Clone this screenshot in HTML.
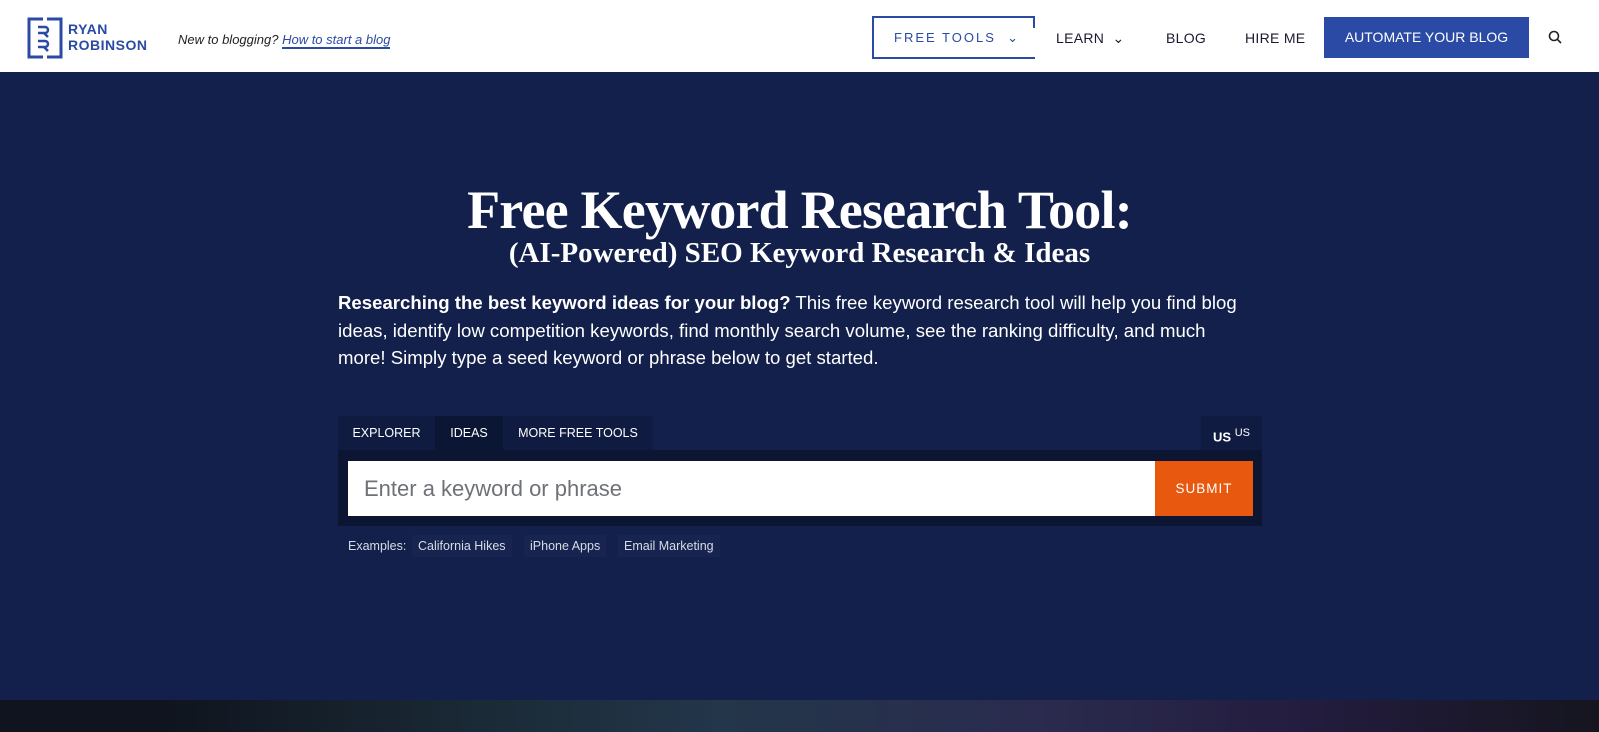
<!DOCTYPE html>
<html><head><meta charset="utf-8"><style>
*{margin:0;padding:0;box-sizing:border-box}
body{width:1599px;height:732px;overflow:hidden;background:#12204b;font-family:"Liberation Sans",sans-serif;position:relative}
.nav{position:absolute;left:0;top:0;width:1599px;height:72px;background:#fff}
.a{position:absolute}
.navl{font-size:14px;color:#1a1a2e;letter-spacing:.3px;top:30px}
.hero{color:#fff}
.tab{position:absolute;top:416px;height:34px;background:#0f1b40;color:#fff;font-size:12.5px;line-height:34px;text-align:center}
.ex{position:absolute;top:535px;height:22px;line-height:22px;font-size:12.5px;color:#d8dbe6;background:#16244f;padding:0 6px}
</style></head><body>
<div class="nav">
 <svg class="a" style="left:27px;top:17px" width="36" height="42" viewBox="0 0 36 42" fill="none" stroke="#2a4aa5" stroke-width="3">
  <path d="M16 2H2V40H16M20 2H34V40H20"/>
  <path d="M11 10h7a3 3 0 0 1 0 6h-7M17 16l4 4" stroke-width="2.5"/>
  <path d="M11 24h7a3 3 0 0 1 0 6h-7M17 30l4 4" stroke-width="2.5"/>
 </svg>
 <div class="a" style="left:68px;top:21px;font-size:14px;font-weight:bold;color:#2a4aa5;line-height:16px;letter-spacing:.5px">RYAN<br>ROBINSON</div>
 <div class="a" style="left:178px;top:32px;font-size:13px;font-style:italic;color:#222">New to blogging? <span style="color:#2a4aa5;border-bottom:2px solid #2a4aa5">How to start a blog</span></div>
 <div class="a" style="left:872px;top:16px;width:163px;height:43px;border:2px solid #2a4aa5;border-right:none"></div>
 <div class="a" style="left:1033px;top:16px;width:2px;height:12px;background:#2a4aa5"></div>
 <div class="a navl" style="left:894px;color:#2a4aa5;letter-spacing:2px;font-size:13px">FREE TOOLS &nbsp;⌄</div>
 <div class="a navl" style="left:1056px">LEARN &nbsp;⌄</div>
 <div class="a navl" style="left:1166px">BLOG</div>
 <div class="a navl" style="left:1245px">HIRE ME</div>
 <div class="a" style="left:1324px;top:17px;width:205px;height:41px;background:#2a4aa5;color:#fff;font-size:14px;line-height:41px;text-align:center">AUTOMATE YOUR BLOG</div>
 <svg class="a" style="left:1548px;top:30px" width="14" height="14" viewBox="0 0 14 14" fill="none" stroke="#222" stroke-width="1.6"><circle cx="6" cy="6" r="4.5"/><path d="M9.3 9.3L13 13"/></svg>
</div>
<div class="a hero" style="left:0;width:1599px;top:179px;text-align:center;font-family:'Liberation Serif',serif;font-weight:bold;font-size:54px;letter-spacing:-.8px">Free Keyword Research Tool:</div>
<div class="a hero" style="left:0;width:1599px;top:237px;text-align:center;font-family:'Liberation Serif',serif;font-weight:bold;font-size:29px">(AI-Powered) SEO Keyword Research &amp; Ideas</div>
<div class="a hero" style="left:338px;top:289px;width:915px;font-size:18.6px;line-height:27.5px"><b>Researching the best keyword ideas for your blog?</b> This free keyword research tool will help you find blog ideas, identify low competition keywords, find monthly search volume, see the ranking difficulty, and much more! Simply type a seed keyword or phrase below to get started.</div>
<div class="tab" style="left:338px;width:97px">EXPLORER</div>
<div class="tab" style="left:435px;width:68px;background:#0b1634">IDEAS</div>
<div class="tab" style="left:503px;width:150px">MORE FREE TOOLS</div>
<div class="tab" style="left:1201px;width:61px;font-size:13px"><b>US</b> <sup style="font-size:11px">US</sup></div>
<div class="a" style="left:338px;top:450px;width:924px;height:76px;background:#0c1633"></div>
<div class="a" style="left:348px;top:461px;width:807px;height:55px;background:#fff;color:#6f7179;font-size:22px;line-height:55px;padding-left:16px">Enter a keyword or phrase</div>
<div class="a" style="left:1155px;top:461px;width:98px;height:55px;background:#e8580f;color:#fff;font-size:13.5px;letter-spacing:1px;line-height:55px;text-align:center">SUBMIT</div>
<div class="a" style="left:348px;top:539px;font-size:12.5px;color:#d8dbe6">Examples:</div>
<div class="ex" style="left:412px">California Hikes</div>
<div class="ex" style="left:524px">iPhone Apps</div>
<div class="ex" style="left:618px">Email Marketing</div>
<div class="a" style="left:0;top:700px;width:1599px;height:32px;background:linear-gradient(90deg,#0f141e 10%,#1a2a36 30%,#23364a 45%,#2a2b4e 65%,#231c3e 82%,#15151f)"></div>
</body></html>
